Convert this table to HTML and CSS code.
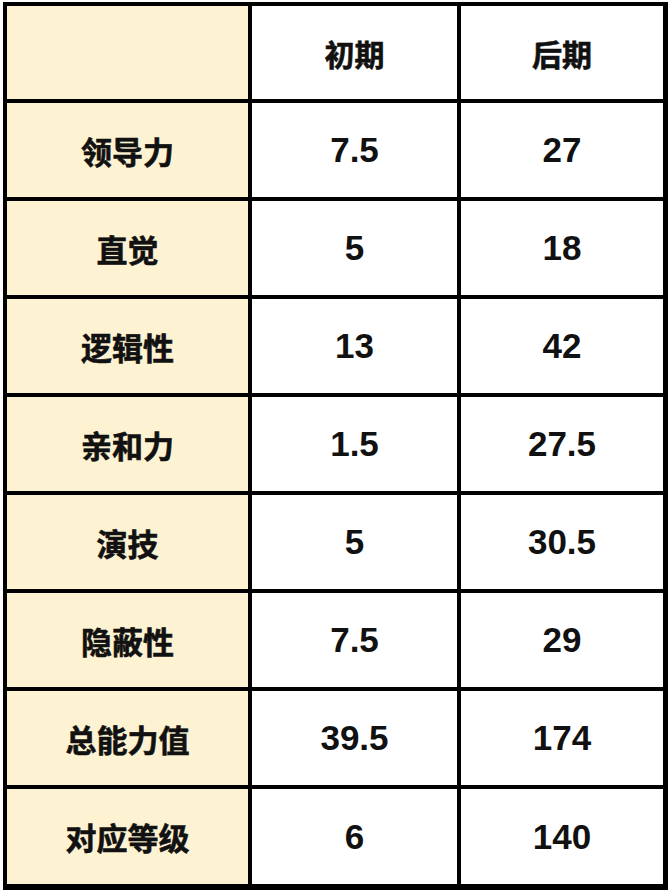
FILE: index.html
```html
<!DOCTYPE html>
<html lang="zh">
<head>
<meta charset="utf-8">
<link rel="stylesheet" href="styles.css">
</head>
<body>
<div class="grid">
  <div class="cell label"></div><div class="cell head">初期</div><div class="cell head">后期</div>
  <div class="cell label">领导力</div><div class="cell num">7.5</div><div class="cell num">27</div>
  <div class="cell label">直觉</div><div class="cell num">5</div><div class="cell num">18</div>
  <div class="cell label">逻辑性</div><div class="cell num">13</div><div class="cell num">42</div>
  <div class="cell label">亲和力</div><div class="cell num">1.5</div><div class="cell num">27.5</div>
  <div class="cell label">演技</div><div class="cell num">5</div><div class="cell num">30.5</div>
  <div class="cell label">隐蔽性</div><div class="cell num">7.5</div><div class="cell num">29</div>
  <div class="cell label">总能力值</div><div class="cell num">39.5</div><div class="cell num">174</div>
  <div class="cell label">对应等级</div><div class="cell num">6</div><div class="cell num">140</div>
</div>
</body>
</html>
```
FILE: styles.css
```css
html, body {
  margin: 0;
  padding: 0;
  background: #ffffff;
}
body {
  padding: 2px 0 0 3px;
}
.grid {
  display: grid;
  grid-template-columns: 241px 205px 202px;
  grid-template-rows: 93px repeat(7, 94px) 95px;
  gap: 4px;
  padding: 4px 5px 6px 4px;
  width: max-content;
  background: #000000;
}
.cell {
  display: flex;
  align-items: center;
  justify-content: center;
  background: #ffffff;
  color: #111111;
  font-weight: bold;
}
.label {
  background: #fdf3d3;
  font-family: "Noto Sans CJK SC", sans-serif;
  font-size: 31px;
  -webkit-text-stroke: 0.6px #111111;
}
.head {
  font-family: "Noto Sans CJK SC", sans-serif;
  font-size: 30px;
  -webkit-text-stroke: 0.6px #111111;
}
.num {
  font-family: "Liberation Sans", Arial, sans-serif;
  font-size: 35px;
}
```
